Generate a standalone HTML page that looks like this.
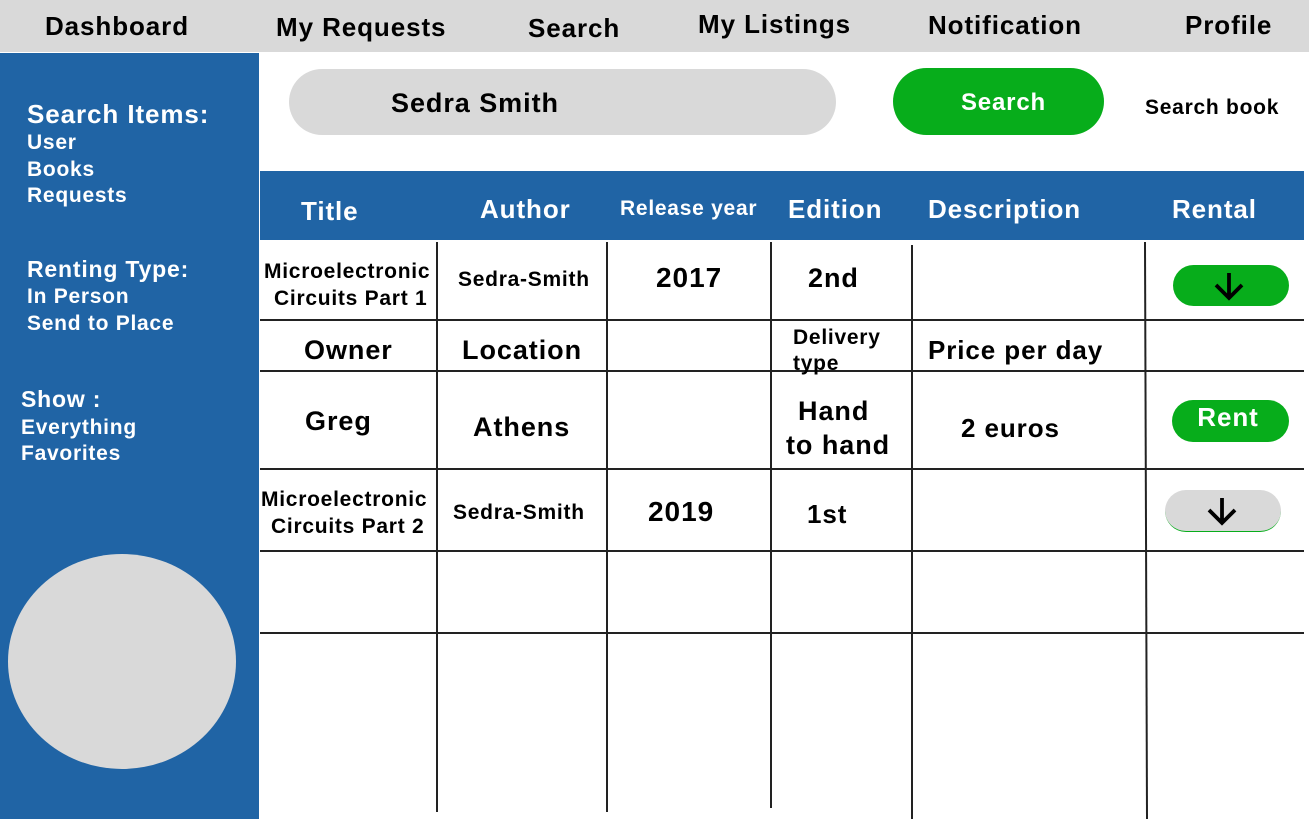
<!DOCTYPE html><html><head><style>
body{margin:0;width:1309px;height:819px;position:relative;overflow:hidden;background:#fff;font-family:"Liberation Sans",sans-serif;font-weight:bold}
div{position:absolute}
.t{line-height:1;white-space:nowrap;letter-spacing:0.035em}
.w{color:#fff}
.v{width:2px;background:#222}
.h{height:2px;background:#222;left:260px;width:1044px}
</style></head><body>
<div style="left:0;top:0;width:1309px;height:52px;background:#d9d9d9"></div>
<div class="t" style="left:45px;top:13px;font-size:26px">Dashboard</div>
<div class="t" style="left:276px;top:14px;font-size:26px">My Requests</div>
<div class="t" style="left:528px;top:15px;font-size:26px">Search</div>
<div class="t" style="left:698px;top:11px;font-size:26px">My Listings</div>
<div class="t" style="left:928px;top:12px;font-size:26px">Notification</div>
<div class="t" style="left:1185px;top:12px;font-size:26px">Profile</div>

<div style="left:0;top:53px;width:259px;height:766px;background:#2064a5"></div>
<div class="t w" style="left:27px;top:101px;font-size:26px">Search Items:</div>
<div class="t w" style="left:27px;top:132px;font-size:21px">User</div>
<div class="t w" style="left:27px;top:159px;font-size:21px">Books</div>
<div class="t w" style="left:27px;top:185px;font-size:21px">Requests</div>
<div class="t w" style="left:27px;top:258px;font-size:23px">Renting Type:</div>
<div class="t w" style="left:27px;top:286px;font-size:21px">In Person</div>
<div class="t w" style="left:27px;top:313px;font-size:21px">Send to Place</div>
<div class="t w" style="left:21px;top:388px;font-size:23px">Show :</div>
<div class="t w" style="left:21px;top:417px;font-size:21px">Everything</div>
<div class="t w" style="left:21px;top:443px;font-size:21px">Favorites</div>
<div style="left:8px;top:554px;width:228px;height:215px;border-radius:50%;background:#d9d9d9"></div>

<div style="left:289px;top:69px;width:547px;height:66px;border-radius:33px;background:#d9d9d9"></div>
<div class="t" style="left:391px;top:90px;font-size:27px">Sedra Smith</div>
<div style="left:893px;top:68px;width:211px;height:67px;border-radius:34px;background:#07ad1b"></div>
<div class="t w" style="left:893px;width:221px;text-align:center;top:91px;font-size:24px">Search</div>
<div class="t" style="left:1145px;top:97px;font-size:21px">Search book</div>

<div style="left:260px;top:171px;width:1044px;height:69px;background:#2064a5"></div>
<div class="t w" style="left:301px;top:198px;font-size:26px">Title</div>
<div class="t w" style="left:480px;top:196px;font-size:26px">Author</div>
<div class="t w" style="left:620px;top:198px;font-size:21px">Release year</div>
<div class="t w" style="left:788px;top:196px;font-size:26px">Edition</div>
<div class="t w" style="left:928px;top:196px;font-size:26px">Description</div>
<div class="t w" style="left:1172px;top:196px;font-size:26px">Rental</div>

<div class="v" style="left:436px;top:242px;height:570px"></div>
<div class="v" style="left:606px;top:242px;height:570px"></div>
<div class="v" style="left:770px;top:242px;height:566px"></div>
<div class="v" style="left:911px;top:245px;height:574px"></div>
<div class="v" style="left:1145px;top:242px;height:577px;transform:rotate(-0.2deg)"></div>
<div class="h" style="top:319px"></div>
<div class="h" style="top:370px"></div>
<div class="h" style="top:468px"></div>
<div class="h" style="top:550px"></div>
<div class="h" style="top:632px"></div>

<div class="t" style="left:264px;top:261px;font-size:21px">Microelectronic</div>
<div class="t" style="left:274px;top:288px;font-size:21px">Circuits Part 1</div>
<div class="t" style="left:458px;top:269px;font-size:21px">Sedra-Smith</div>
<div class="t" style="left:656px;top:264px;font-size:28px">2017</div>
<div class="t" style="left:808px;top:265px;font-size:27px">2nd</div>
<div style="left:1173px;top:265px;width:116px;height:41px;border-radius:21px;background:#07ad1b"></div>
<svg style="position:absolute;left:1211px;top:271px" width="36" height="32" viewBox="0 0 36 32"><path d="M18 2V27M5 14L18 27L31 14" stroke="#000" stroke-width="3.8" fill="none"/></svg>

<div class="t" style="left:304px;top:337px;font-size:27px">Owner</div>
<div class="t" style="left:462px;top:337px;font-size:27px">Location</div>
<div class="t" style="left:793px;top:327px;font-size:21px">Delivery</div>
<div class="t" style="left:793px;top:353px;font-size:21px">type</div>
<div class="t" style="left:928px;top:337px;font-size:26px">Price per day</div>

<div class="t" style="left:305px;top:408px;font-size:27px">Greg</div>
<div class="t" style="left:473px;top:414px;font-size:27px">Athens</div>
<div class="t" style="left:798px;top:398px;font-size:27px">Hand</div>
<div class="t" style="left:786px;top:432px;font-size:27px">to hand</div>
<div class="t" style="left:961px;top:415px;font-size:26px">2 euros</div>
<div style="left:1172px;top:400px;width:117px;height:42px;border-radius:21px;background:#07ad1b"></div>
<div class="t w" style="left:1172px;width:112px;text-align:center;top:404px;font-size:26px">Rent</div>

<div class="t" style="left:261px;top:489px;font-size:21px">Microelectronic</div>
<div class="t" style="left:271px;top:516px;font-size:21px">Circuits Part 2</div>
<div class="t" style="left:453px;top:502px;font-size:21px">Sedra-Smith</div>
<div class="t" style="left:648px;top:498px;font-size:28px">2019</div>
<div class="t" style="left:807px;top:501px;font-size:26px">1st</div>
<div style="left:1165px;top:490px;width:116px;height:41px;border-radius:21px;background:#d9d9d9;border-bottom:1px solid #07ad1b"></div>
<svg style="position:absolute;left:1204px;top:496px" width="36" height="32" viewBox="0 0 36 32"><path d="M18 2V27M5 14L18 27L31 14" stroke="#000" stroke-width="3.8" fill="none"/></svg>
</body></html>
